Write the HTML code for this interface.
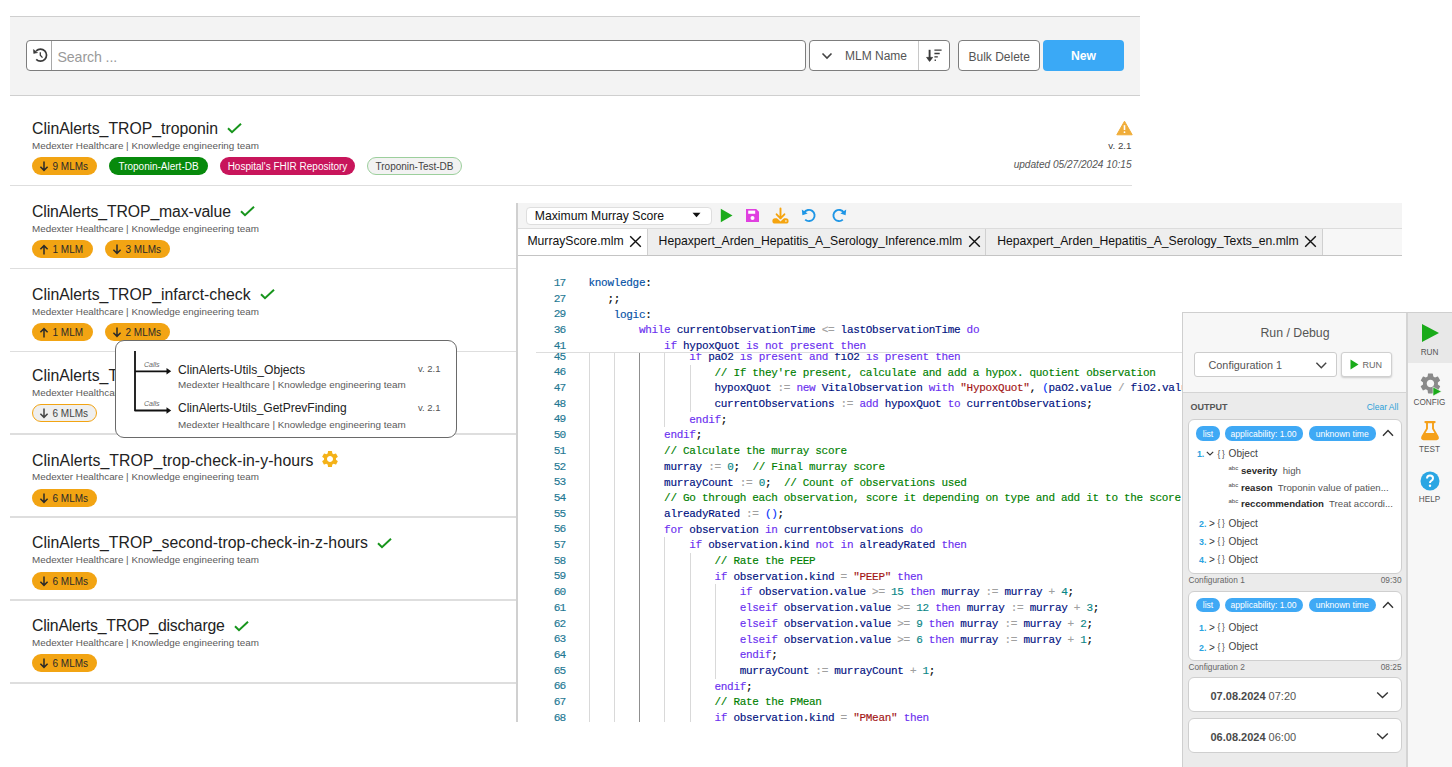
<!DOCTYPE html><html><head><meta charset="utf-8"><style>html,body{margin:0;padding:0;}body{width:1452px;height:767px;position:relative;overflow:hidden;background:#fff;font-family:"Liberation Sans",sans-serif;}</style></head><body><div style="position:absolute;left:10px;top:16px;width:1130px;height:80px;box-sizing:border-box;background:#f3f3f3;border-top:1px solid #cfcfcf;border-bottom:1px solid #cfcfcf;"></div>
<div style="position:absolute;left:26px;top:40px;width:780px;height:31px;box-sizing:border-box;background:#fff;border:1px solid #7d7d7d;border-radius:4px;"></div>
<div style="position:absolute;left:51px;top:41px;width:1px;height:29px;box-sizing:border-box;background:#a8a8a8;"></div>
<svg style="position:absolute;left:31.5px;top:47px" width="18" height="18" viewBox="0 0 18 18"><path d="M4.22 3.82 A6.05 6.05 0 1 1 4.22 12.38" fill="none" stroke="#3a3a3a" stroke-width="1.7"/><path d="M1.4 2.5 L1.7 6.5 L5.6 5.6 Z" fill="#3a3a3a" stroke="#3a3a3a" stroke-width="0.5" stroke-linejoin="round"/><path d="M8.3 5.3 V8.3 L10.5 10.6" fill="none" stroke="#3a3a3a" stroke-width="1.3"/></svg>
<div style="position:absolute;left:57.50px;top:49.88px;font-family:'Liberation Sans', sans-serif;font-size:14.2px;line-height:14.2px;color:#9a9a9a;font-weight:400;font-style:normal;white-space:pre;letter-spacing:-0.12px;">Search ...</div>
<div style="position:absolute;left:809px;top:40px;width:141px;height:31px;box-sizing:border-box;background:#fff;border:1px solid #7d7d7d;border-radius:4px;"></div>
<div style="position:absolute;left:918px;top:41px;width:1px;height:29px;box-sizing:border-box;background:#c8c8c8;"></div>
<svg style="position:absolute;left:820px;top:51px" width="14" height="10" viewBox="0 0 14 10"><polyline points="2.5,2.5 7,7 11.5,2.5" fill="none" stroke="#444" stroke-width="1.6"/></svg>
<div style="position:absolute;left:845.00px;top:50.34px;font-family:'Liberation Sans', sans-serif;font-size:12px;line-height:12px;color:#555;font-weight:400;font-style:normal;white-space:pre;">MLM Name</div>
<svg style="position:absolute;left:925px;top:48px" width="18" height="16" viewBox="0 0 18 16"><path d="M4.6 1.8 V12" stroke="#3a3a3a" stroke-width="1.9" fill="none"/><path d="M1.6 9.4 L4.6 13.4 L7.6 9.4 Z" fill="#3a3a3a" stroke="#3a3a3a" stroke-width="0.8" stroke-linejoin="round"/><path d="M9.4 2.1 H16.6 M9.4 5.5 H14.7 M9.4 8.9 H12.8 M9.6 12.2 H10.9" stroke="#3a3a3a" stroke-width="1.4" fill="none"/></svg>
<div style="position:absolute;left:958px;top:40px;width:82px;height:31px;box-sizing:border-box;background:#fff;border:1px solid #7d7d7d;border-radius:4px;"></div>
<div style="position:absolute;left:968.50px;top:50.64px;font-family:'Liberation Sans', sans-serif;font-size:12px;line-height:12px;color:#555;font-weight:400;font-style:normal;white-space:pre;">Bulk Delete</div>
<div style="position:absolute;left:1043px;top:40px;width:81px;height:31px;box-sizing:border-box;background:#3aa9f6;border-radius:4px;"></div>
<div style="position:absolute;left:1083.50px;transform:translateX(-50%);top:50.47px;font-family:'Liberation Sans', sans-serif;font-size:12.2px;line-height:12.2px;color:#fff;font-weight:700;font-style:normal;white-space:pre;">New</div>
<div style="position:absolute;left:10px;top:184.75px;width:1122px;height:1.5px;box-sizing:border-box;background:#dedede;"></div>
<div id="t0" style="position:absolute;left:32px;top:120.78px;font-family:'Liberation Sans', sans-serif;font-size:15.8px;line-height:15.8px;color:#222;white-space:pre;letter-spacing:0px">ClinAlerts_TROP_troponin<span style="display:inline-block;position:relative;width:0;height:0;"><svg style="position:absolute;left:9px;top:-10.5px" width="15" height="11" viewBox="0 0 15 11"><polyline points="1,5.2 5,9.2 14,0.8" fill="none" stroke="#17951c" stroke-width="2"/></svg></span></div>
<div style="position:absolute;left:32.00px;top:140.76px;font-family:'Liberation Sans', sans-serif;font-size:9.85px;line-height:9.85px;color:#5a5a5a;font-weight:400;font-style:normal;white-space:pre;">Medexter Healthcare | Knowledge engineering team</div>
<div style="position:absolute;left:32px;top:157px;width:65px;height:18px;box-sizing:border-box;background:#f2a413;border-radius:9px;"></div><svg style="position:absolute;left:39.2px;top:160.6px" width="10" height="11" viewBox="0 0 10 11"><path d="M5 0.5 V9.2 M1.4 5.8 L5 9.4 L8.6 5.8" fill="none" stroke="#2a2a2a" stroke-width="1.5"/></svg><div style="position:absolute;left:52.50px;top:162.13px;font-family:'Liberation Sans', sans-serif;font-size:10px;line-height:10px;color:#2a2a2a;font-weight:400;font-style:normal;white-space:pre;">9 MLMs</div>
<div style="position:absolute;left:109px;top:157px;width:99px;height:18px;box-sizing:border-box;background:#078a0c;border-radius:9px;"></div><div style="position:absolute;left:158.50px;transform:translateX(-50%);top:162.13px;font-family:'Liberation Sans', sans-serif;font-size:10px;line-height:10px;color:#fff;font-weight:400;font-style:normal;white-space:pre;">Troponin-Alert-DB</div>
<div style="position:absolute;left:220px;top:157px;width:135px;height:18px;box-sizing:border-box;background:#c8155b;border-radius:9px;"></div><div style="position:absolute;left:287.50px;transform:translateX(-50%);top:162.13px;font-family:'Liberation Sans', sans-serif;font-size:10px;line-height:10px;color:#fff;font-weight:400;font-style:normal;white-space:pre;">Hospital&#x27;s FHIR Repository</div>
<div style="position:absolute;left:367px;top:157px;width:95px;height:18px;box-sizing:border-box;background:#f2f2f2;border:1px solid #9ccf9c;border-radius:9px;"></div><div style="position:absolute;left:414.50px;transform:translateX(-50%);top:162.13px;font-family:'Liberation Sans', sans-serif;font-size:10px;line-height:10px;color:#444;font-weight:400;font-style:normal;white-space:pre;">Troponin-Test-DB</div>
<div style="position:absolute;left:10px;top:267.75px;width:1122px;height:1.5px;box-sizing:border-box;background:#dedede;"></div>
<div id="t1" style="position:absolute;left:32px;top:203.71px;font-family:'Liberation Sans', sans-serif;font-size:15.8px;line-height:15.8px;color:#222;white-space:pre;letter-spacing:-0.125px">ClinAlerts_TROP_max-value<span style="display:inline-block;position:relative;width:0;height:0;"><svg style="position:absolute;left:9px;top:-10.5px" width="15" height="11" viewBox="0 0 15 11"><polyline points="1,5.2 5,9.2 14,0.8" fill="none" stroke="#17951c" stroke-width="2"/></svg></span></div>
<div style="position:absolute;left:32.00px;top:223.69px;font-family:'Liberation Sans', sans-serif;font-size:9.85px;line-height:9.85px;color:#5a5a5a;font-weight:400;font-style:normal;white-space:pre;">Medexter Healthcare | Knowledge engineering team</div>
<div style="position:absolute;left:32px;top:240px;width:61px;height:18px;box-sizing:border-box;background:#f2a413;border-radius:9px;"></div><svg style="position:absolute;left:39.2px;top:243.6px" width="10" height="11" viewBox="0 0 10 11"><path d="M5 10.5 V1.8 M1.4 5.2 L5 1.6 L8.6 5.2" fill="none" stroke="#2a2a2a" stroke-width="1.5"/></svg><div style="position:absolute;left:52.50px;top:245.13px;font-family:'Liberation Sans', sans-serif;font-size:10px;line-height:10px;color:#2a2a2a;font-weight:400;font-style:normal;white-space:pre;">1 MLM</div>
<div style="position:absolute;left:105px;top:240px;width:65px;height:18px;box-sizing:border-box;background:#f2a413;border-radius:9px;"></div><svg style="position:absolute;left:112.2px;top:243.6px" width="10" height="11" viewBox="0 0 10 11"><path d="M5 0.5 V9.2 M1.4 5.8 L5 9.4 L8.6 5.8" fill="none" stroke="#2a2a2a" stroke-width="1.5"/></svg><div style="position:absolute;left:125.50px;top:245.13px;font-family:'Liberation Sans', sans-serif;font-size:10px;line-height:10px;color:#2a2a2a;font-weight:400;font-style:normal;white-space:pre;">3 MLMs</div>
<div style="position:absolute;left:10px;top:350.75px;width:1122px;height:1.5px;box-sizing:border-box;background:#dedede;"></div>
<div id="t2" style="position:absolute;left:32px;top:286.64px;font-family:'Liberation Sans', sans-serif;font-size:15.8px;line-height:15.8px;color:#222;white-space:pre;letter-spacing:0px">ClinAlerts_TROP_infarct-check<span style="display:inline-block;position:relative;width:0;height:0;"><svg style="position:absolute;left:9px;top:-10.5px" width="15" height="11" viewBox="0 0 15 11"><polyline points="1,5.2 5,9.2 14,0.8" fill="none" stroke="#17951c" stroke-width="2"/></svg></span></div>
<div style="position:absolute;left:32.00px;top:306.62px;font-family:'Liberation Sans', sans-serif;font-size:9.85px;line-height:9.85px;color:#5a5a5a;font-weight:400;font-style:normal;white-space:pre;">Medexter Healthcare | Knowledge engineering team</div>
<div style="position:absolute;left:32px;top:323px;width:61px;height:18px;box-sizing:border-box;background:#f2a413;border-radius:9px;"></div><svg style="position:absolute;left:39.2px;top:326.6px" width="10" height="11" viewBox="0 0 10 11"><path d="M5 10.5 V1.8 M1.4 5.2 L5 1.6 L8.6 5.2" fill="none" stroke="#2a2a2a" stroke-width="1.5"/></svg><div style="position:absolute;left:52.50px;top:328.14px;font-family:'Liberation Sans', sans-serif;font-size:10px;line-height:10px;color:#2a2a2a;font-weight:400;font-style:normal;white-space:pre;">1 MLM</div>
<div style="position:absolute;left:105px;top:323px;width:65px;height:18px;box-sizing:border-box;background:#f2a413;border-radius:9px;"></div><svg style="position:absolute;left:112.2px;top:326.6px" width="10" height="11" viewBox="0 0 10 11"><path d="M5 0.5 V9.2 M1.4 5.8 L5 9.4 L8.6 5.8" fill="none" stroke="#2a2a2a" stroke-width="1.5"/></svg><div style="position:absolute;left:125.50px;top:328.14px;font-family:'Liberation Sans', sans-serif;font-size:10px;line-height:10px;color:#2a2a2a;font-weight:400;font-style:normal;white-space:pre;">2 MLMs</div>
<div style="position:absolute;left:10px;top:433.25px;width:1122px;height:1.5px;box-sizing:border-box;background:#dedede;"></div>
<div id="t3" style="position:absolute;left:32px;top:367.57px;font-family:'Liberation Sans', sans-serif;font-size:15.8px;line-height:15.8px;color:#222;white-space:pre;letter-spacing:0px">ClinAlerts_TROP_trop-check-in-x-hours<span style="display:inline-block;position:relative;width:0;height:0;"><svg style="position:absolute;left:9px;top:-10.5px" width="15" height="11" viewBox="0 0 15 11"><polyline points="1,5.2 5,9.2 14,0.8" fill="none" stroke="#17951c" stroke-width="2"/></svg></span></div>
<div style="position:absolute;left:32.00px;top:387.55px;font-family:'Liberation Sans', sans-serif;font-size:9.85px;line-height:9.85px;color:#5a5a5a;font-weight:400;font-style:normal;white-space:pre;">Medexter Healthcare | Knowledge engineering team</div>
<div style="position:absolute;left:32px;top:404px;width:65px;height:18px;box-sizing:border-box;background:#efefef;border:1px solid #f2a413;border-radius:9px;"></div><svg style="position:absolute;left:39.2px;top:407.6px" width="10" height="11" viewBox="0 0 10 11"><path d="M5 0.5 V9.2 M1.4 5.8 L5 9.4 L8.6 5.8" fill="none" stroke="#444" stroke-width="1.5"/></svg><div style="position:absolute;left:52.50px;top:409.14px;font-family:'Liberation Sans', sans-serif;font-size:10px;line-height:10px;color:#444;font-weight:400;font-style:normal;white-space:pre;">6 MLMs</div>
<div style="position:absolute;left:10px;top:516.25px;width:1122px;height:1.5px;box-sizing:border-box;background:#dedede;"></div>
<div id="t4" style="position:absolute;left:32px;top:452.50px;font-family:'Liberation Sans', sans-serif;font-size:15.8px;line-height:15.8px;color:#222;white-space:pre;letter-spacing:0.087px">ClinAlerts_TROP_trop-check-in-y-hours<span style="display:inline-block;position:relative;width:0;height:0;"><svg style="position:absolute;left:6.4px;top:-16.6px" width="20" height="20" viewBox="0 0 24 24"><path fill="#f4b219" d="M19.14 12.94c.04-.3.06-.61.06-.94 0-.32-.02-.64-.07-.94l2.03-1.58a.49.49 0 0 0 .12-.61l-1.92-3.32a.488.488 0 0 0-.59-.22l-2.39.96c-.5-.38-1.030-.7-1.62-.94l-.36-2.54a.484.484 0 0 0-.48-.41h-3.84c-.24 0-.43.17-.47.41l-.36 2.54c-.59.24-1.130.57-1.62.94l-2.39-.96a.48.48 0 0 0-.59.22L2.740 8.870c-.12.21-.08.47.12.61l2.030 1.580c-.05.3-.09.63-.09.94s.02.64.07.94l-2.03 1.58a.49.49 0 0 0-.12.61l1.92 3.32c.12.22.37.29.59.22l2.39-.96c.5.38 1.03.7 1.62.94l.36 2.54c.05.24.24.41.48.41h3.84c.24 0 .44-.17.47-.41l.36-2.54c.59-.24 1.13-.56 1.62-.94l2.39.96c.22.08.47 0 .59-.22l1.92-3.32c.12-.22.07-.47-.12-.61l-2.01-1.58zM12 15.6c-1.98 0-3.6-1.620-3.6-3.6s1.620-3.6 3.6-3.6 3.6 1.62 3.6 3.6-1.62 3.6-3.6 3.6z"/></svg></span></div>
<div style="position:absolute;left:32.00px;top:472.48px;font-family:'Liberation Sans', sans-serif;font-size:9.85px;line-height:9.85px;color:#5a5a5a;font-weight:400;font-style:normal;white-space:pre;">Medexter Healthcare | Knowledge engineering team</div>
<div style="position:absolute;left:32px;top:489px;width:65px;height:18px;box-sizing:border-box;background:#f2a413;border-radius:9px;"></div><svg style="position:absolute;left:39.2px;top:492.6px" width="10" height="11" viewBox="0 0 10 11"><path d="M5 0.5 V9.2 M1.4 5.8 L5 9.4 L8.6 5.8" fill="none" stroke="#2a2a2a" stroke-width="1.5"/></svg><div style="position:absolute;left:52.50px;top:494.14px;font-family:'Liberation Sans', sans-serif;font-size:10px;line-height:10px;color:#2a2a2a;font-weight:400;font-style:normal;white-space:pre;">6 MLMs</div>
<div style="position:absolute;left:10px;top:599.25px;width:1122px;height:1.5px;box-sizing:border-box;background:#dedede;"></div>
<div id="t5" style="position:absolute;left:32px;top:535.43px;font-family:'Liberation Sans', sans-serif;font-size:15.8px;line-height:15.8px;color:#222;white-space:pre;letter-spacing:0.035px">ClinAlerts_TROP_second-trop-check-in-z-hours<span style="display:inline-block;position:relative;width:0;height:0;"><svg style="position:absolute;left:9px;top:-10.5px" width="15" height="11" viewBox="0 0 15 11"><polyline points="1,5.2 5,9.2 14,0.8" fill="none" stroke="#17951c" stroke-width="2"/></svg></span></div>
<div style="position:absolute;left:32.00px;top:555.41px;font-family:'Liberation Sans', sans-serif;font-size:9.85px;line-height:9.85px;color:#5a5a5a;font-weight:400;font-style:normal;white-space:pre;">Medexter Healthcare | Knowledge engineering team</div>
<div style="position:absolute;left:32px;top:572px;width:65px;height:18px;box-sizing:border-box;background:#f2a413;border-radius:9px;"></div><svg style="position:absolute;left:39.2px;top:575.6px" width="10" height="11" viewBox="0 0 10 11"><path d="M5 0.5 V9.2 M1.4 5.8 L5 9.4 L8.6 5.8" fill="none" stroke="#2a2a2a" stroke-width="1.5"/></svg><div style="position:absolute;left:52.50px;top:577.13px;font-family:'Liberation Sans', sans-serif;font-size:10px;line-height:10px;color:#2a2a2a;font-weight:400;font-style:normal;white-space:pre;">6 MLMs</div>
<div style="position:absolute;left:10px;top:682.25px;width:1122px;height:1.5px;box-sizing:border-box;background:#dedede;"></div>
<div id="t6" style="position:absolute;left:32px;top:618.36px;font-family:'Liberation Sans', sans-serif;font-size:15.8px;line-height:15.8px;color:#222;white-space:pre;letter-spacing:-0.194px">ClinAlerts_TROP_discharge<span style="display:inline-block;position:relative;width:0;height:0;"><svg style="position:absolute;left:9px;top:-10.5px" width="15" height="11" viewBox="0 0 15 11"><polyline points="1,5.2 5,9.2 14,0.8" fill="none" stroke="#17951c" stroke-width="2"/></svg></span></div>
<div style="position:absolute;left:32.00px;top:638.34px;font-family:'Liberation Sans', sans-serif;font-size:9.85px;line-height:9.85px;color:#5a5a5a;font-weight:400;font-style:normal;white-space:pre;">Medexter Healthcare | Knowledge engineering team</div>
<div style="position:absolute;left:32px;top:654px;width:65px;height:18px;box-sizing:border-box;background:#f2a413;border-radius:9px;"></div><svg style="position:absolute;left:39.2px;top:657.6px" width="10" height="11" viewBox="0 0 10 11"><path d="M5 0.5 V9.2 M1.4 5.8 L5 9.4 L8.6 5.8" fill="none" stroke="#2a2a2a" stroke-width="1.5"/></svg><div style="position:absolute;left:52.50px;top:659.13px;font-family:'Liberation Sans', sans-serif;font-size:10px;line-height:10px;color:#2a2a2a;font-weight:400;font-style:normal;white-space:pre;">6 MLMs</div>
<svg style="position:absolute;left:1116px;top:120px" width="17" height="16" viewBox="0 0 17 16"><path d="M8.5 1.2 L16.2 14.8 H0.8 Z" fill="#f0ad3a" stroke="#f0ad3a" stroke-width="1" stroke-linejoin="round"/><path d="M8.5 5.2 V10" stroke="#fff" stroke-width="1.6"/><circle cx="8.5" cy="12.2" r="0.9" fill="#fff"/></svg>
<div style="position:absolute;right:320.50px;top:140.50px;font-family:'Liberation Sans', sans-serif;font-size:9.8px;line-height:9.8px;color:#444;font-weight:400;font-style:normal;white-space:pre;">v. 2.1</div>
<div style="position:absolute;right:320.50px;top:160.45px;font-family:'Liberation Sans', sans-serif;font-size:10.1px;line-height:10.1px;color:#555;font-weight:400;font-style:italic;white-space:pre;">updated 05/27/2024 10:15</div>
<div style="position:absolute;left:115px;top:340px;width:342px;height:98px;box-sizing:border-box;background:#fff;border:1px solid #6a6a6a;border-radius:9px;"></div>
<svg style="position:absolute;left:130px;top:348px" width="50" height="70" viewBox="0 0 50 70"><path d="M5 3 V63.3 M5 23.3 H37 M5 62.5 H37" fill="none" stroke="#111" stroke-width="1.8"/><path d="M36.5 20.1 L41.2 23.3 L36.5 26.5 Z M36.5 59.3 L41.2 62.5 L36.5 65.7 Z" fill="#111"/></svg>
<div style="position:absolute;left:144.00px;top:360.57px;font-family:'Liberation Sans', sans-serif;font-size:7px;line-height:7px;color:#666;font-weight:400;font-style:italic;white-space:pre;">Calls</div>
<div style="position:absolute;left:144.00px;top:400.07px;font-family:'Liberation Sans', sans-serif;font-size:7px;line-height:7px;color:#666;font-weight:400;font-style:italic;white-space:pre;">Calls</div>
<div style="position:absolute;left:178.00px;top:364.06px;font-family:'Liberation Sans', sans-serif;font-size:12.1px;line-height:12.1px;color:#222;font-weight:400;font-style:normal;white-space:pre;">ClinAlerts-Utils_Objects</div>
<div style="position:absolute;left:178.00px;top:380.12px;font-family:'Liberation Sans', sans-serif;font-size:9.9px;line-height:9.9px;color:#5a5a5a;font-weight:400;font-style:normal;white-space:pre;">Medexter Healthcare | Knowledge engineering team</div>
<div style="position:absolute;left:178.00px;top:402.04px;font-family:'Liberation Sans', sans-serif;font-size:12.0px;line-height:12.0px;color:#222;font-weight:400;font-style:normal;white-space:pre;">ClinAlerts-Utils_GetPrevFinding</div>
<div style="position:absolute;left:178.00px;top:419.92px;font-family:'Liberation Sans', sans-serif;font-size:9.9px;line-height:9.9px;color:#5a5a5a;font-weight:400;font-style:normal;white-space:pre;">Medexter Healthcare | Knowledge engineering team</div>
<div style="position:absolute;right:1011.50px;top:364.46px;font-family:'Liberation Sans', sans-serif;font-size:9.5px;line-height:9.5px;color:#555;font-weight:400;font-style:normal;white-space:pre;">v. 2.1</div>
<div style="position:absolute;right:1011.50px;top:402.96px;font-family:'Liberation Sans', sans-serif;font-size:9.5px;line-height:9.5px;color:#555;font-weight:400;font-style:normal;white-space:pre;">v. 2.1</div>
<div style="position:absolute;left:516px;top:203px;width:886px;height:519px;box-sizing:border-box;background:#fff;"></div>
<div style="position:absolute;left:515.5px;top:203px;width:2px;height:519px;box-sizing:border-box;background:#d0d0d0;"></div>
<div style="position:absolute;left:518px;top:203px;width:884px;height:25px;box-sizing:border-box;background:#f4f4f4;"></div>
<div style="position:absolute;left:526px;top:207px;width:186px;height:18px;box-sizing:border-box;background:#fff;border:1px solid #dedede;border-radius:4px;"></div>
<div style="position:absolute;left:534.80px;top:209.87px;font-family:'Liberation Sans', sans-serif;font-size:12.2px;line-height:12.2px;color:#111;font-weight:400;font-style:normal;white-space:pre;">Maximum Murray Score</div>
<svg style="position:absolute;left:692px;top:212px" width="9" height="6" viewBox="0 0 9 6"><path d="M0.5 0.8 H8.5 L4.5 5.2 Z" fill="#111"/></svg>
<svg style="position:absolute;left:720px;top:208px" width="13" height="15" viewBox="0 0 13 15"><path d="M0.8 0.8 L12.5 7.5 L0.8 14.2 Z" fill="#1aab1a"/></svg>
<svg style="position:absolute;left:745px;top:208px" width="15" height="15" viewBox="0 0 15 15"><path d="M1 1 H11.2 L14 3.8 V14 H1 Z" fill="#e040e0"/><rect x="3.2" y="2.6" width="7" height="3.2" fill="#fff"/><circle cx="7.5" cy="10" r="2" fill="#fff"/></svg>
<svg style="position:absolute;left:772px;top:207px" width="17" height="17" viewBox="0 0 17 17"><rect x="0.4" y="11.3" width="16.2" height="5.3" rx="2.65" fill="#f5a40f"/><path d="M4.6 9.6 L8.5 13.4 L12.4 9.6" fill="none" stroke="#f4f4f4" stroke-width="1.6"/><rect x="13.1" y="13.2" width="1.6" height="1.6" fill="#fbe3b0"/><path d="M8.5 1.4 V11.4 M4.6 7.3 L8.5 11.3 L12.4 7.3" fill="none" stroke="#f5a40f" stroke-width="1.9" stroke-linecap="round" stroke-linejoin="round"/></svg>
<svg style="position:absolute;left:801px;top:207px" width="17" height="16" viewBox="0 0 17 16"><path d="M3.2 5.6 A5.6 5.6 0 1 1 4.2 12.6" fill="none" stroke="#1e96e6" stroke-width="1.9"/><path d="M0.8 2.6 L1.4 8.2 L6.6 6.6 Z" fill="#1e96e6"/></svg>
<svg style="position:absolute;left:830px;top:207px" width="17" height="16" viewBox="0 0 17 16"><path d="M13.8 5.6 A5.6 5.6 0 1 0 12.8 12.6" fill="none" stroke="#1e96e6" stroke-width="1.9"/><path d="M16.2 2.6 L15.6 8.2 L10.4 6.6 Z" fill="#1e96e6"/></svg>
<div style="position:absolute;left:518px;top:228px;width:884px;height:28px;box-sizing:border-box;background:#f7f7f7;border-top:1px solid #dcdcdc;border-bottom:1px solid #c4c4c4;"></div>
<div style="position:absolute;left:518px;top:229px;width:129px;height:26px;box-sizing:border-box;background:#fff;"></div>
<div style="position:absolute;left:647px;top:229px;width:338px;height:26px;box-sizing:border-box;background:#eeeeee;border-left:1px solid #d0d0d0;"></div>
<div style="position:absolute;left:985px;top:229px;width:338px;height:26px;box-sizing:border-box;background:#eeeeee;border-left:1px solid #d0d0d0;border-right:1px solid #d0d0d0;"></div>
<div style="position:absolute;left:527.40px;top:235.47px;font-family:'Liberation Sans', sans-serif;font-size:12.2px;line-height:12.2px;color:#111;font-weight:400;font-style:normal;white-space:pre;">MurrayScore.mlm</div>
<svg style="position:absolute;left:629px;top:234.5px" width="13" height="13" viewBox="0 0 13 13"><path d="M1.2 1.2 L11.8 11.8 M11.8 1.2 L1.2 11.8" stroke="#111" stroke-width="1.4"/></svg>
<div style="position:absolute;left:658.60px;top:235.47px;font-family:'Liberation Sans', sans-serif;font-size:12.2px;line-height:12.2px;color:#111;font-weight:400;font-style:normal;white-space:pre;">Hepaxpert_Arden_Hepatitis_A_Serology_Inference.mlm</div>
<svg style="position:absolute;left:968px;top:234.5px" width="13" height="13" viewBox="0 0 13 13"><path d="M1.2 1.2 L11.8 11.8 M11.8 1.2 L1.2 11.8" stroke="#111" stroke-width="1.4"/></svg>
<div style="position:absolute;left:997.20px;top:235.47px;font-family:'Liberation Sans', sans-serif;font-size:12.2px;line-height:12.2px;color:#111;font-weight:400;font-style:normal;white-space:pre;">Hepaxpert_Arden_Hepatitis_A_Serology_Texts_en.mlm</div>
<svg style="position:absolute;left:1304px;top:234.5px" width="13" height="13" viewBox="0 0 13 13"><path d="M1.2 1.2 L11.8 11.8 M11.8 1.2 L1.2 11.8" stroke="#111" stroke-width="1.4"/></svg>
<div style="position:absolute;left:518px;top:353px;width:884px;height:369px;overflow:hidden;">
<div style="position:absolute;left:70.50px;top:0.00px;width:1px;height:372.75px;background:#d9d9d9"></div>
<div style="position:absolute;left:95.82px;top:0.00px;width:1px;height:372.75px;background:#d9d9d9"></div>
<div style="position:absolute;left:121.14px;top:0.00px;width:1px;height:372.75px;background:#8f8f8f"></div>
<div style="position:absolute;left:146.46px;top:0.00px;width:1px;height:74.45px;background:#d9d9d9"></div>
<div style="position:absolute;left:171.78px;top:11.65px;width:1px;height:47.10px;background:#d9d9d9"></div>
<div style="position:absolute;left:146.46px;top:184.35px;width:1px;height:188.40px;background:#d9d9d9"></div>
<div style="position:absolute;left:171.78px;top:200.05px;width:1px;height:172.70px;background:#d9d9d9"></div>
<div style="position:absolute;left:197.10px;top:231.45px;width:1px;height:94.20px;background:#d9d9d9"></div>
<div style="position:absolute;left:0;top:-4.05px;width:47.299999999999955px;text-align:right;font-family:'Liberation Mono', monospace;font-size:11.2px;line-height:15.7px;white-space:pre;letter-spacing:-0.9px;-webkit-text-stroke:0.15px;padding-top:0.7px;color:#237893">45</div>
<div style="position:absolute;left:70.50px;top:-4.05px;font-family:'Liberation Mono', monospace;font-size:11.0px;line-height:15.7px;white-space:pre;letter-spacing:-0.301px;-webkit-text-stroke:0.15px;transform:translateY(0.5px);color:#000">                <span style="color:#6a2ff0">if</span> <span style="color:#001080">paO2</span> <span style="color:#6a2ff0">is</span> <span style="color:#6a2ff0">present</span> <span style="color:#6a2ff0">and</span> <span style="color:#001080">fiO2</span> <span style="color:#6a2ff0">is</span> <span style="color:#6a2ff0">present</span> <span style="color:#6a2ff0">then</span></div>
<div style="position:absolute;left:0;top:11.65px;width:47.299999999999955px;text-align:right;font-family:'Liberation Mono', monospace;font-size:11.2px;line-height:15.7px;white-space:pre;letter-spacing:-0.9px;-webkit-text-stroke:0.15px;padding-top:0.7px;color:#237893">46</div>
<div style="position:absolute;left:70.50px;top:11.65px;font-family:'Liberation Mono', monospace;font-size:11.0px;line-height:15.7px;white-space:pre;letter-spacing:-0.301px;-webkit-text-stroke:0.15px;transform:translateY(0.5px);color:#000">                    <span style="color:#008000">// If they&#x27;re present, calculate and add a hypox. quotient observation</span></div>
<div style="position:absolute;left:0;top:27.35px;width:47.299999999999955px;text-align:right;font-family:'Liberation Mono', monospace;font-size:11.2px;line-height:15.7px;white-space:pre;letter-spacing:-0.9px;-webkit-text-stroke:0.15px;padding-top:0.7px;color:#237893">47</div>
<div style="position:absolute;left:70.50px;top:27.35px;font-family:'Liberation Mono', monospace;font-size:11.0px;line-height:15.7px;white-space:pre;letter-spacing:-0.301px;-webkit-text-stroke:0.15px;transform:translateY(0.5px);color:#000">                    <span style="color:#001080">hypoxQuot</span> <span style="color:#a0a0a0">:=</span> <span style="color:#6a2ff0">new</span> <span style="color:#001080">VitalObservation</span> <span style="color:#6a2ff0">with</span> <span style="color:#a31515">&quot;HypoxQuot&quot;</span><span style="color:#000">,</span> <span style="color:#0431fa">(</span><span style="color:#001080">paO2</span><span style="color:#000">.</span><span style="color:#001080">value</span> <span style="color:#a0a0a0">/</span> <span style="color:#001080">fiO2</span><span style="color:#000">.</span><span style="color:#001080">value</span><span style="color:#0431fa">)</span><span style="color:#000">;</span></div>
<div style="position:absolute;left:0;top:43.05px;width:47.299999999999955px;text-align:right;font-family:'Liberation Mono', monospace;font-size:11.2px;line-height:15.7px;white-space:pre;letter-spacing:-0.9px;-webkit-text-stroke:0.15px;padding-top:0.7px;color:#237893">48</div>
<div style="position:absolute;left:70.50px;top:43.05px;font-family:'Liberation Mono', monospace;font-size:11.0px;line-height:15.7px;white-space:pre;letter-spacing:-0.301px;-webkit-text-stroke:0.15px;transform:translateY(0.5px);color:#000">                    <span style="color:#001080">currentObservations</span> <span style="color:#a0a0a0">:=</span> <span style="color:#6a2ff0">add</span> <span style="color:#001080">hypoxQuot</span> <span style="color:#6a2ff0">to</span> <span style="color:#001080">currentObservations</span><span style="color:#000">;</span></div>
<div style="position:absolute;left:0;top:58.75px;width:47.299999999999955px;text-align:right;font-family:'Liberation Mono', monospace;font-size:11.2px;line-height:15.7px;white-space:pre;letter-spacing:-0.9px;-webkit-text-stroke:0.15px;padding-top:0.7px;color:#237893">49</div>
<div style="position:absolute;left:70.50px;top:58.75px;font-family:'Liberation Mono', monospace;font-size:11.0px;line-height:15.7px;white-space:pre;letter-spacing:-0.301px;-webkit-text-stroke:0.15px;transform:translateY(0.5px);color:#000">                <span style="color:#6a2ff0">endif</span><span style="color:#000">;</span></div>
<div style="position:absolute;left:0;top:74.45px;width:47.299999999999955px;text-align:right;font-family:'Liberation Mono', monospace;font-size:11.2px;line-height:15.7px;white-space:pre;letter-spacing:-0.9px;-webkit-text-stroke:0.15px;padding-top:0.7px;color:#237893">50</div>
<div style="position:absolute;left:70.50px;top:74.45px;font-family:'Liberation Mono', monospace;font-size:11.0px;line-height:15.7px;white-space:pre;letter-spacing:-0.301px;-webkit-text-stroke:0.15px;transform:translateY(0.5px);color:#000">            <span style="color:#6a2ff0">endif</span><span style="color:#000">;</span></div>
<div style="position:absolute;left:0;top:90.15px;width:47.299999999999955px;text-align:right;font-family:'Liberation Mono', monospace;font-size:11.2px;line-height:15.7px;white-space:pre;letter-spacing:-0.9px;-webkit-text-stroke:0.15px;padding-top:0.7px;color:#237893">51</div>
<div style="position:absolute;left:70.50px;top:90.15px;font-family:'Liberation Mono', monospace;font-size:11.0px;line-height:15.7px;white-space:pre;letter-spacing:-0.301px;-webkit-text-stroke:0.15px;transform:translateY(0.5px);color:#000">            <span style="color:#008000">// Calculate the murray score</span></div>
<div style="position:absolute;left:0;top:105.85px;width:47.299999999999955px;text-align:right;font-family:'Liberation Mono', monospace;font-size:11.2px;line-height:15.7px;white-space:pre;letter-spacing:-0.9px;-webkit-text-stroke:0.15px;padding-top:0.7px;color:#237893">52</div>
<div style="position:absolute;left:70.50px;top:105.85px;font-family:'Liberation Mono', monospace;font-size:11.0px;line-height:15.7px;white-space:pre;letter-spacing:-0.301px;-webkit-text-stroke:0.15px;transform:translateY(0.5px);color:#000">            <span style="color:#001080">murray</span> <span style="color:#a0a0a0">:=</span> <span style="color:#098686">0</span><span style="color:#000">;</span>  <span style="color:#008000">// Final murray score</span></div>
<div style="position:absolute;left:0;top:121.55px;width:47.299999999999955px;text-align:right;font-family:'Liberation Mono', monospace;font-size:11.2px;line-height:15.7px;white-space:pre;letter-spacing:-0.9px;-webkit-text-stroke:0.15px;padding-top:0.7px;color:#237893">53</div>
<div style="position:absolute;left:70.50px;top:121.55px;font-family:'Liberation Mono', monospace;font-size:11.0px;line-height:15.7px;white-space:pre;letter-spacing:-0.301px;-webkit-text-stroke:0.15px;transform:translateY(0.5px);color:#000">            <span style="color:#001080">murrayCount</span> <span style="color:#a0a0a0">:=</span> <span style="color:#098686">0</span><span style="color:#000">;</span>  <span style="color:#008000">// Count of observations used</span></div>
<div style="position:absolute;left:0;top:137.25px;width:47.299999999999955px;text-align:right;font-family:'Liberation Mono', monospace;font-size:11.2px;line-height:15.7px;white-space:pre;letter-spacing:-0.9px;-webkit-text-stroke:0.15px;padding-top:0.7px;color:#237893">54</div>
<div style="position:absolute;left:70.50px;top:137.25px;font-family:'Liberation Mono', monospace;font-size:11.0px;line-height:15.7px;white-space:pre;letter-spacing:-0.301px;-webkit-text-stroke:0.15px;transform:translateY(0.5px);color:#000">            <span style="color:#008000">// Go through each observation, score it depending on type and add it to the score</span></div>
<div style="position:absolute;left:0;top:152.95px;width:47.299999999999955px;text-align:right;font-family:'Liberation Mono', monospace;font-size:11.2px;line-height:15.7px;white-space:pre;letter-spacing:-0.9px;-webkit-text-stroke:0.15px;padding-top:0.7px;color:#237893">55</div>
<div style="position:absolute;left:70.50px;top:152.95px;font-family:'Liberation Mono', monospace;font-size:11.0px;line-height:15.7px;white-space:pre;letter-spacing:-0.301px;-webkit-text-stroke:0.15px;transform:translateY(0.5px);color:#000">            <span style="color:#001080">alreadyRated</span> <span style="color:#a0a0a0">:=</span> <span style="color:#0431fa">(</span><span style="color:#0431fa">)</span><span style="color:#000">;</span></div>
<div style="position:absolute;left:0;top:168.65px;width:47.299999999999955px;text-align:right;font-family:'Liberation Mono', monospace;font-size:11.2px;line-height:15.7px;white-space:pre;letter-spacing:-0.9px;-webkit-text-stroke:0.15px;padding-top:0.7px;color:#237893">56</div>
<div style="position:absolute;left:70.50px;top:168.65px;font-family:'Liberation Mono', monospace;font-size:11.0px;line-height:15.7px;white-space:pre;letter-spacing:-0.301px;-webkit-text-stroke:0.15px;transform:translateY(0.5px);color:#000">            <span style="color:#6a2ff0">for</span> <span style="color:#001080">observation</span> <span style="color:#6a2ff0">in</span> <span style="color:#001080">currentObservations</span> <span style="color:#6a2ff0">do</span></div>
<div style="position:absolute;left:0;top:184.35px;width:47.299999999999955px;text-align:right;font-family:'Liberation Mono', monospace;font-size:11.2px;line-height:15.7px;white-space:pre;letter-spacing:-0.9px;-webkit-text-stroke:0.15px;padding-top:0.7px;color:#237893">57</div>
<div style="position:absolute;left:70.50px;top:184.35px;font-family:'Liberation Mono', monospace;font-size:11.0px;line-height:15.7px;white-space:pre;letter-spacing:-0.301px;-webkit-text-stroke:0.15px;transform:translateY(0.5px);color:#000">                <span style="color:#6a2ff0">if</span> <span style="color:#001080">observation</span><span style="color:#000">.</span><span style="color:#001080">kind</span> <span style="color:#6a2ff0">not</span> <span style="color:#6a2ff0">in</span> <span style="color:#001080">alreadyRated</span> <span style="color:#6a2ff0">then</span></div>
<div style="position:absolute;left:0;top:200.05px;width:47.299999999999955px;text-align:right;font-family:'Liberation Mono', monospace;font-size:11.2px;line-height:15.7px;white-space:pre;letter-spacing:-0.9px;-webkit-text-stroke:0.15px;padding-top:0.7px;color:#237893">58</div>
<div style="position:absolute;left:70.50px;top:200.05px;font-family:'Liberation Mono', monospace;font-size:11.0px;line-height:15.7px;white-space:pre;letter-spacing:-0.301px;-webkit-text-stroke:0.15px;transform:translateY(0.5px);color:#000">                    <span style="color:#008000">// Rate the PEEP</span></div>
<div style="position:absolute;left:0;top:215.75px;width:47.299999999999955px;text-align:right;font-family:'Liberation Mono', monospace;font-size:11.2px;line-height:15.7px;white-space:pre;letter-spacing:-0.9px;-webkit-text-stroke:0.15px;padding-top:0.7px;color:#237893">59</div>
<div style="position:absolute;left:70.50px;top:215.75px;font-family:'Liberation Mono', monospace;font-size:11.0px;line-height:15.7px;white-space:pre;letter-spacing:-0.301px;-webkit-text-stroke:0.15px;transform:translateY(0.5px);color:#000">                    <span style="color:#6a2ff0">if</span> <span style="color:#001080">observation</span><span style="color:#000">.</span><span style="color:#001080">kind</span> <span style="color:#a0a0a0">=</span> <span style="color:#a31515">&quot;PEEP&quot;</span> <span style="color:#6a2ff0">then</span></div>
<div style="position:absolute;left:0;top:231.45px;width:47.299999999999955px;text-align:right;font-family:'Liberation Mono', monospace;font-size:11.2px;line-height:15.7px;white-space:pre;letter-spacing:-0.9px;-webkit-text-stroke:0.15px;padding-top:0.7px;color:#237893">60</div>
<div style="position:absolute;left:70.50px;top:231.45px;font-family:'Liberation Mono', monospace;font-size:11.0px;line-height:15.7px;white-space:pre;letter-spacing:-0.301px;-webkit-text-stroke:0.15px;transform:translateY(0.5px);color:#000">                        <span style="color:#6a2ff0">if</span> <span style="color:#001080">observation</span><span style="color:#000">.</span><span style="color:#001080">value</span> <span style="color:#a0a0a0">&gt;=</span> <span style="color:#098686">15</span> <span style="color:#6a2ff0">then</span> <span style="color:#001080">murray</span> <span style="color:#a0a0a0">:=</span> <span style="color:#001080">murray</span> <span style="color:#a0a0a0">+</span> <span style="color:#098686">4</span><span style="color:#000">;</span></div>
<div style="position:absolute;left:0;top:247.15px;width:47.299999999999955px;text-align:right;font-family:'Liberation Mono', monospace;font-size:11.2px;line-height:15.7px;white-space:pre;letter-spacing:-0.9px;-webkit-text-stroke:0.15px;padding-top:0.7px;color:#237893">61</div>
<div style="position:absolute;left:70.50px;top:247.15px;font-family:'Liberation Mono', monospace;font-size:11.0px;line-height:15.7px;white-space:pre;letter-spacing:-0.301px;-webkit-text-stroke:0.15px;transform:translateY(0.5px);color:#000">                        <span style="color:#6a2ff0">elseif</span> <span style="color:#001080">observation</span><span style="color:#000">.</span><span style="color:#001080">value</span> <span style="color:#a0a0a0">&gt;=</span> <span style="color:#098686">12</span> <span style="color:#6a2ff0">then</span> <span style="color:#001080">murray</span> <span style="color:#a0a0a0">:=</span> <span style="color:#001080">murray</span> <span style="color:#a0a0a0">+</span> <span style="color:#098686">3</span><span style="color:#000">;</span></div>
<div style="position:absolute;left:0;top:262.85px;width:47.299999999999955px;text-align:right;font-family:'Liberation Mono', monospace;font-size:11.2px;line-height:15.7px;white-space:pre;letter-spacing:-0.9px;-webkit-text-stroke:0.15px;padding-top:0.7px;color:#237893">62</div>
<div style="position:absolute;left:70.50px;top:262.85px;font-family:'Liberation Mono', monospace;font-size:11.0px;line-height:15.7px;white-space:pre;letter-spacing:-0.301px;-webkit-text-stroke:0.15px;transform:translateY(0.5px);color:#000">                        <span style="color:#6a2ff0">elseif</span> <span style="color:#001080">observation</span><span style="color:#000">.</span><span style="color:#001080">value</span> <span style="color:#a0a0a0">&gt;=</span> <span style="color:#098686">9</span> <span style="color:#6a2ff0">then</span> <span style="color:#001080">murray</span> <span style="color:#a0a0a0">:=</span> <span style="color:#001080">murray</span> <span style="color:#a0a0a0">+</span> <span style="color:#098686">2</span><span style="color:#000">;</span></div>
<div style="position:absolute;left:0;top:278.55px;width:47.299999999999955px;text-align:right;font-family:'Liberation Mono', monospace;font-size:11.2px;line-height:15.7px;white-space:pre;letter-spacing:-0.9px;-webkit-text-stroke:0.15px;padding-top:0.7px;color:#237893">63</div>
<div style="position:absolute;left:70.50px;top:278.55px;font-family:'Liberation Mono', monospace;font-size:11.0px;line-height:15.7px;white-space:pre;letter-spacing:-0.301px;-webkit-text-stroke:0.15px;transform:translateY(0.5px);color:#000">                        <span style="color:#6a2ff0">elseif</span> <span style="color:#001080">observation</span><span style="color:#000">.</span><span style="color:#001080">value</span> <span style="color:#a0a0a0">&gt;=</span> <span style="color:#098686">6</span> <span style="color:#6a2ff0">then</span> <span style="color:#001080">murray</span> <span style="color:#a0a0a0">:=</span> <span style="color:#001080">murray</span> <span style="color:#a0a0a0">+</span> <span style="color:#098686">1</span><span style="color:#000">;</span></div>
<div style="position:absolute;left:0;top:294.25px;width:47.299999999999955px;text-align:right;font-family:'Liberation Mono', monospace;font-size:11.2px;line-height:15.7px;white-space:pre;letter-spacing:-0.9px;-webkit-text-stroke:0.15px;padding-top:0.7px;color:#237893">64</div>
<div style="position:absolute;left:70.50px;top:294.25px;font-family:'Liberation Mono', monospace;font-size:11.0px;line-height:15.7px;white-space:pre;letter-spacing:-0.301px;-webkit-text-stroke:0.15px;transform:translateY(0.5px);color:#000">                        <span style="color:#6a2ff0">endif</span><span style="color:#000">;</span></div>
<div style="position:absolute;left:0;top:309.95px;width:47.299999999999955px;text-align:right;font-family:'Liberation Mono', monospace;font-size:11.2px;line-height:15.7px;white-space:pre;letter-spacing:-0.9px;-webkit-text-stroke:0.15px;padding-top:0.7px;color:#237893">65</div>
<div style="position:absolute;left:70.50px;top:309.95px;font-family:'Liberation Mono', monospace;font-size:11.0px;line-height:15.7px;white-space:pre;letter-spacing:-0.301px;-webkit-text-stroke:0.15px;transform:translateY(0.5px);color:#000">                        <span style="color:#001080">murrayCount</span> <span style="color:#a0a0a0">:=</span> <span style="color:#001080">murrayCount</span> <span style="color:#a0a0a0">+</span> <span style="color:#098686">1</span><span style="color:#000">;</span></div>
<div style="position:absolute;left:0;top:325.65px;width:47.299999999999955px;text-align:right;font-family:'Liberation Mono', monospace;font-size:11.2px;line-height:15.7px;white-space:pre;letter-spacing:-0.9px;-webkit-text-stroke:0.15px;padding-top:0.7px;color:#237893">66</div>
<div style="position:absolute;left:70.50px;top:325.65px;font-family:'Liberation Mono', monospace;font-size:11.0px;line-height:15.7px;white-space:pre;letter-spacing:-0.301px;-webkit-text-stroke:0.15px;transform:translateY(0.5px);color:#000">                    <span style="color:#6a2ff0">endif</span><span style="color:#000">;</span></div>
<div style="position:absolute;left:0;top:341.35px;width:47.299999999999955px;text-align:right;font-family:'Liberation Mono', monospace;font-size:11.2px;line-height:15.7px;white-space:pre;letter-spacing:-0.9px;-webkit-text-stroke:0.15px;padding-top:0.7px;color:#237893">67</div>
<div style="position:absolute;left:70.50px;top:341.35px;font-family:'Liberation Mono', monospace;font-size:11.0px;line-height:15.7px;white-space:pre;letter-spacing:-0.301px;-webkit-text-stroke:0.15px;transform:translateY(0.5px);color:#000">                    <span style="color:#008000">// Rate the PMean</span></div>
<div style="position:absolute;left:0;top:357.05px;width:47.299999999999955px;text-align:right;font-family:'Liberation Mono', monospace;font-size:11.2px;line-height:15.7px;white-space:pre;letter-spacing:-0.9px;-webkit-text-stroke:0.15px;padding-top:0.7px;color:#237893">68</div>
<div style="position:absolute;left:70.50px;top:357.05px;font-family:'Liberation Mono', monospace;font-size:11.0px;line-height:15.7px;white-space:pre;letter-spacing:-0.301px;-webkit-text-stroke:0.15px;transform:translateY(0.5px);color:#000">                    <span style="color:#6a2ff0">if</span> <span style="color:#001080">observation</span><span style="color:#000">.</span><span style="color:#001080">kind</span> <span style="color:#a0a0a0">=</span> <span style="color:#a31515">&quot;PMean&quot;</span> <span style="color:#6a2ff0">then</span></div>
</div>
<div style="position:absolute;left:518px;top:275.35px;width:47.299999999999955px;text-align:right;font-family:'Liberation Mono', monospace;font-size:11.2px;line-height:15.7px;white-space:pre;letter-spacing:-0.9px;-webkit-text-stroke:0.15px;padding-top:0.7px;color:#237893">17</div>
<div style="position:absolute;left:588.50px;top:275.35px;font-family:'Liberation Mono', monospace;font-size:11.0px;line-height:15.7px;white-space:pre;letter-spacing:-0.301px;-webkit-text-stroke:0.15px;transform:translateY(0.5px);color:#000"><span style="color:#0451a5">knowledge</span><span style="color:#000">:</span></div>
<div style="position:absolute;left:518px;top:291.05px;width:47.299999999999955px;text-align:right;font-family:'Liberation Mono', monospace;font-size:11.2px;line-height:15.7px;white-space:pre;letter-spacing:-0.9px;-webkit-text-stroke:0.15px;padding-top:0.7px;color:#237893">27</div>
<div style="position:absolute;left:588.50px;top:291.05px;font-family:'Liberation Mono', monospace;font-size:11.0px;line-height:15.7px;white-space:pre;letter-spacing:-0.301px;-webkit-text-stroke:0.15px;transform:translateY(0.5px);color:#000">   <span style="color:#000">;</span><span style="color:#000">;</span></div>
<div style="position:absolute;left:518px;top:306.75px;width:47.299999999999955px;text-align:right;font-family:'Liberation Mono', monospace;font-size:11.2px;line-height:15.7px;white-space:pre;letter-spacing:-0.9px;-webkit-text-stroke:0.15px;padding-top:0.7px;color:#237893">29</div>
<div style="position:absolute;left:588.50px;top:306.75px;font-family:'Liberation Mono', monospace;font-size:11.0px;line-height:15.7px;white-space:pre;letter-spacing:-0.301px;-webkit-text-stroke:0.15px;transform:translateY(0.5px);color:#000">    <span style="color:#0451a5">logic</span><span style="color:#000">:</span></div>
<div style="position:absolute;left:518px;top:322.45px;width:47.299999999999955px;text-align:right;font-family:'Liberation Mono', monospace;font-size:11.2px;line-height:15.7px;white-space:pre;letter-spacing:-0.9px;-webkit-text-stroke:0.15px;padding-top:0.7px;color:#237893">36</div>
<div style="position:absolute;left:588.50px;top:322.45px;font-family:'Liberation Mono', monospace;font-size:11.0px;line-height:15.7px;white-space:pre;letter-spacing:-0.301px;-webkit-text-stroke:0.15px;transform:translateY(0.5px);color:#000">        <span style="color:#6a2ff0">while</span> <span style="color:#001080">currentObservationTime</span> <span style="color:#a0a0a0">&lt;=</span> <span style="color:#001080">lastObservationTime</span> <span style="color:#6a2ff0">do</span></div>
<div style="position:absolute;left:518px;top:338.15px;width:47.299999999999955px;text-align:right;font-family:'Liberation Mono', monospace;font-size:11.2px;line-height:15.7px;white-space:pre;letter-spacing:-0.9px;-webkit-text-stroke:0.15px;padding-top:0.7px;color:#237893">41</div>
<div style="position:absolute;left:588.50px;top:338.15px;font-family:'Liberation Mono', monospace;font-size:11.0px;line-height:15.7px;white-space:pre;letter-spacing:-0.301px;-webkit-text-stroke:0.15px;transform:translateY(0.5px);color:#000">            <span style="color:#6a2ff0">if</span> <span style="color:#001080">hypoxQuot</span> <span style="color:#6a2ff0">is</span> <span style="color:#6a2ff0">not</span> <span style="color:#6a2ff0">present</span> <span style="color:#6a2ff0">then</span></div>
<div style="position:absolute;left:536px;top:352px;width:866px;height:1px;box-sizing:border-box;background:#dddddd;"></div>
<div style="position:absolute;left:1182px;top:312px;width:270px;height:455px;box-sizing:border-box;background:#f7f7f7;border-left:1px solid #cfcfcf;border-top:1px solid #cfcfcf;"></div>
<div style="position:absolute;left:1183px;top:392px;width:224px;height:375px;box-sizing:border-box;background:#ebebeb;border-top:1px solid #d4d4d4;"></div>
<div style="position:absolute;left:1406px;top:313px;width:46px;height:454px;box-sizing:border-box;background:#f7f7f7;border-left:2px solid #d4d4d4;"></div>
<div style="position:absolute;left:1408px;top:313px;width:44px;height:50px;box-sizing:border-box;background:#e8e8e8;"></div>
<div style="position:absolute;left:1295.00px;transform:translateX(-50%);top:326.59px;font-family:'Liberation Sans', sans-serif;font-size:12.3px;line-height:12.3px;color:#555;font-weight:400;font-style:normal;white-space:pre;">Run / Debug</div>
<div style="position:absolute;left:1194px;top:352px;width:143px;height:25px;box-sizing:border-box;background:#fff;border:1px solid #cccccc;border-radius:3px;"></div>
<div style="position:absolute;left:1208.50px;top:359.82px;font-family:'Liberation Sans', sans-serif;font-size:10.85px;line-height:10.85px;color:#555;font-weight:400;font-style:normal;white-space:pre;">Configuration 1</div>
<svg style="position:absolute;left:1315px;top:361px" width="13" height="9" viewBox="0 0 13 9"><polyline points="1.4,1.7 6.3,6.8 11.2,1.7" fill="none" stroke="#444" stroke-width="1.4"/></svg>
<div style="position:absolute;left:1341px;top:352px;width:51px;height:25px;box-sizing:border-box;background:#fff;border:1px solid #d0d0d0;border-radius:3px;box-shadow:0 1px 2px rgba(0,0,0,0.18);"></div>
<svg style="position:absolute;left:1350px;top:359px" width="9" height="11" viewBox="0 0 9 11"><path d="M0.5 0.5 L8.5 5.5 L0.5 10.5 Z" fill="#1aab1a"/></svg>
<div style="position:absolute;left:1362.50px;top:361.18px;font-family:'Liberation Sans', sans-serif;font-size:9px;line-height:9px;color:#666;font-weight:400;font-style:normal;white-space:pre;">RUN</div>
<div style="position:absolute;left:1190.50px;top:402.58px;font-family:'Liberation Sans', sans-serif;font-size:9px;line-height:9px;color:#555;font-weight:700;font-style:normal;white-space:pre;">OUTPUT</div>
<div style="position:absolute;right:53.70px;top:402.80px;font-family:'Liberation Sans', sans-serif;font-size:8.5px;line-height:8.5px;color:#2a9fd8;font-weight:400;font-style:normal;white-space:pre;">Clear All</div>
<div style="position:absolute;left:1188px;top:419px;width:214px;height:155px;box-sizing:border-box;background:#fff;border:1px solid #cfcfcf;border-radius:6px;"></div>
<div style="position:absolute;left:1196px;top:426px;width:24px;height:14.5px;box-sizing:border-box;background:#3fa9f5;border-radius:7px;"></div><div style="position:absolute;left:1208.00px;transform:translateX(-50%);top:429.82px;font-family:'Liberation Sans', sans-serif;font-size:8.6px;line-height:8.6px;color:#fff;font-weight:400;font-style:normal;white-space:pre;">list</div>
<div style="position:absolute;left:1224.5px;top:426px;width:78px;height:14.5px;box-sizing:border-box;background:#3fa9f5;border-radius:7px;"></div><div style="position:absolute;left:1263.50px;transform:translateX(-50%);top:429.82px;font-family:'Liberation Sans', sans-serif;font-size:8.6px;line-height:8.6px;color:#fff;font-weight:400;font-style:normal;white-space:pre;">applicability: 1.00</div>
<div style="position:absolute;left:1309px;top:426px;width:66.5px;height:14.5px;box-sizing:border-box;background:#3fa9f5;border-radius:7px;"></div><div style="position:absolute;left:1342.25px;transform:translateX(-50%);top:429.82px;font-family:'Liberation Sans', sans-serif;font-size:8.6px;line-height:8.6px;color:#fff;font-weight:400;font-style:normal;white-space:pre;">unknown time</div>
<svg style="position:absolute;left:1381.5px;top:429px" width="12" height="8" viewBox="0 0 12 8"><polyline points="1,6.8 6,1.6 11,6.8" fill="none" stroke="#333" stroke-width="1.4"/></svg>
<div style="position:absolute;left:1196.90px;top:450.35px;font-family:'Liberation Sans', sans-serif;font-size:8.8px;line-height:8.8px;color:#2aa3e0;font-weight:700;font-style:normal;white-space:pre;">1.</div><svg style="position:absolute;left:1205.9px;top:451.2px" width="8" height="5" viewBox="0 0 8 5"><polyline points="0.8,0.8 4,4 7.2,0.8" fill="none" stroke="#333" stroke-width="1.1"/></svg><div style="position:absolute;left:1217.40px;top:450.56px;font-family:'Liberation Sans', sans-serif;font-size:8.2px;line-height:8.2px;color:#444;font-weight:400;font-style:normal;white-space:pre;">{</div><div style="position:absolute;left:1221.90px;top:450.56px;font-family:'Liberation Sans', sans-serif;font-size:8.2px;line-height:8.2px;color:#444;font-weight:400;font-style:normal;white-space:pre;">}</div><div style="position:absolute;left:1228.60px;top:449.25px;font-family:'Liberation Sans', sans-serif;font-size:10.1px;line-height:10.1px;color:#444;font-weight:400;font-style:normal;white-space:pre;">Object</div>
<div style="position:absolute;left:1228.50px;top:465.22px;font-family:'Liberation Sans', sans-serif;font-size:6px;line-height:6px;color:#444;font-weight:400;font-style:normal;white-space:pre;">abc</div>
<div style="position:absolute;left:1241px;top:465.83px;font-family:'Liberation Sans', sans-serif;font-size:9.65px;line-height:9.65px;white-space:pre;color:#333"><b style="color:#2b2b2b">severity</b>&nbsp; <span style="color:#555">high</span></div>
<div style="position:absolute;left:1228.50px;top:481.92px;font-family:'Liberation Sans', sans-serif;font-size:6px;line-height:6px;color:#444;font-weight:400;font-style:normal;white-space:pre;">abc</div>
<div style="position:absolute;left:1241px;top:482.53px;font-family:'Liberation Sans', sans-serif;font-size:9.65px;line-height:9.65px;white-space:pre;color:#333"><b style="color:#2b2b2b">reason</b>&nbsp; <span style="color:#555">Troponin value of patien...</span></div>
<div style="position:absolute;left:1228.50px;top:498.42px;font-family:'Liberation Sans', sans-serif;font-size:6px;line-height:6px;color:#444;font-weight:400;font-style:normal;white-space:pre;">abc</div>
<div style="position:absolute;left:1241px;top:499.03px;font-family:'Liberation Sans', sans-serif;font-size:9.65px;line-height:9.65px;white-space:pre;color:#333"><b style="color:#2b2b2b">reccommendation</b>&nbsp; <span style="color:#555">Treat accordi...</span></div>
<div style="position:absolute;left:1199.00px;top:520.05px;font-family:'Liberation Sans', sans-serif;font-size:8.8px;line-height:8.8px;color:#2aa3e0;font-weight:700;font-style:normal;white-space:pre;">2.</div><div style="position:absolute;left:1209.00px;top:519.03px;font-family:'Liberation Sans', sans-serif;font-size:10px;line-height:10px;color:#333;font-weight:400;font-style:normal;white-space:pre;">&gt;</div><div style="position:absolute;left:1217.40px;top:520.26px;font-family:'Liberation Sans', sans-serif;font-size:8.2px;line-height:8.2px;color:#444;font-weight:400;font-style:normal;white-space:pre;">{</div><div style="position:absolute;left:1221.90px;top:520.26px;font-family:'Liberation Sans', sans-serif;font-size:8.2px;line-height:8.2px;color:#444;font-weight:400;font-style:normal;white-space:pre;">}</div><div style="position:absolute;left:1228.60px;top:518.95px;font-family:'Liberation Sans', sans-serif;font-size:10.1px;line-height:10.1px;color:#444;font-weight:400;font-style:normal;white-space:pre;">Object</div>
<div style="position:absolute;left:1199.00px;top:537.65px;font-family:'Liberation Sans', sans-serif;font-size:8.8px;line-height:8.8px;color:#2aa3e0;font-weight:700;font-style:normal;white-space:pre;">3.</div><div style="position:absolute;left:1209.00px;top:536.63px;font-family:'Liberation Sans', sans-serif;font-size:10px;line-height:10px;color:#333;font-weight:400;font-style:normal;white-space:pre;">&gt;</div><div style="position:absolute;left:1217.40px;top:537.86px;font-family:'Liberation Sans', sans-serif;font-size:8.2px;line-height:8.2px;color:#444;font-weight:400;font-style:normal;white-space:pre;">{</div><div style="position:absolute;left:1221.90px;top:537.86px;font-family:'Liberation Sans', sans-serif;font-size:8.2px;line-height:8.2px;color:#444;font-weight:400;font-style:normal;white-space:pre;">}</div><div style="position:absolute;left:1228.60px;top:536.55px;font-family:'Liberation Sans', sans-serif;font-size:10.1px;line-height:10.1px;color:#444;font-weight:400;font-style:normal;white-space:pre;">Object</div>
<div style="position:absolute;left:1199.00px;top:555.95px;font-family:'Liberation Sans', sans-serif;font-size:8.8px;line-height:8.8px;color:#2aa3e0;font-weight:700;font-style:normal;white-space:pre;">4.</div><div style="position:absolute;left:1209.00px;top:554.93px;font-family:'Liberation Sans', sans-serif;font-size:10px;line-height:10px;color:#333;font-weight:400;font-style:normal;white-space:pre;">&gt;</div><div style="position:absolute;left:1217.40px;top:556.16px;font-family:'Liberation Sans', sans-serif;font-size:8.2px;line-height:8.2px;color:#444;font-weight:400;font-style:normal;white-space:pre;">{</div><div style="position:absolute;left:1221.90px;top:556.16px;font-family:'Liberation Sans', sans-serif;font-size:8.2px;line-height:8.2px;color:#444;font-weight:400;font-style:normal;white-space:pre;">}</div><div style="position:absolute;left:1228.60px;top:554.85px;font-family:'Liberation Sans', sans-serif;font-size:10.1px;line-height:10.1px;color:#444;font-weight:400;font-style:normal;white-space:pre;">Object</div>
<div style="position:absolute;left:1188.50px;top:576.17px;font-family:'Liberation Sans', sans-serif;font-size:8.3px;line-height:8.3px;color:#666;font-weight:400;font-style:normal;white-space:pre;">Configuration 1</div>
<div style="position:absolute;right:50.50px;top:576.17px;font-family:'Liberation Sans', sans-serif;font-size:8.3px;line-height:8.3px;color:#666;font-weight:400;font-style:normal;white-space:pre;">09:30</div>
<div style="position:absolute;left:1188px;top:591px;width:214px;height:70px;box-sizing:border-box;background:#fff;border:1px solid #cfcfcf;border-radius:6px;"></div>
<div style="position:absolute;left:1196px;top:597.5px;width:24px;height:14.5px;box-sizing:border-box;background:#3fa9f5;border-radius:7px;"></div><div style="position:absolute;left:1208.00px;transform:translateX(-50%);top:601.32px;font-family:'Liberation Sans', sans-serif;font-size:8.6px;line-height:8.6px;color:#fff;font-weight:400;font-style:normal;white-space:pre;">list</div>
<div style="position:absolute;left:1224.5px;top:597.5px;width:78px;height:14.5px;box-sizing:border-box;background:#3fa9f5;border-radius:7px;"></div><div style="position:absolute;left:1263.50px;transform:translateX(-50%);top:601.32px;font-family:'Liberation Sans', sans-serif;font-size:8.6px;line-height:8.6px;color:#fff;font-weight:400;font-style:normal;white-space:pre;">applicability: 1.00</div>
<div style="position:absolute;left:1309px;top:597.5px;width:66.5px;height:14.5px;box-sizing:border-box;background:#3fa9f5;border-radius:7px;"></div><div style="position:absolute;left:1342.25px;transform:translateX(-50%);top:601.32px;font-family:'Liberation Sans', sans-serif;font-size:8.6px;line-height:8.6px;color:#fff;font-weight:400;font-style:normal;white-space:pre;">unknown time</div>
<svg style="position:absolute;left:1381.5px;top:600.5px" width="12" height="8" viewBox="0 0 12 8"><polyline points="1,6.8 6,1.6 11,6.8" fill="none" stroke="#333" stroke-width="1.4"/></svg>
<div style="position:absolute;left:1199.00px;top:624.05px;font-family:'Liberation Sans', sans-serif;font-size:8.8px;line-height:8.8px;color:#2aa3e0;font-weight:700;font-style:normal;white-space:pre;">1.</div><div style="position:absolute;left:1209.00px;top:623.03px;font-family:'Liberation Sans', sans-serif;font-size:10px;line-height:10px;color:#333;font-weight:400;font-style:normal;white-space:pre;">&gt;</div><div style="position:absolute;left:1217.40px;top:624.26px;font-family:'Liberation Sans', sans-serif;font-size:8.2px;line-height:8.2px;color:#444;font-weight:400;font-style:normal;white-space:pre;">{</div><div style="position:absolute;left:1221.90px;top:624.26px;font-family:'Liberation Sans', sans-serif;font-size:8.2px;line-height:8.2px;color:#444;font-weight:400;font-style:normal;white-space:pre;">}</div><div style="position:absolute;left:1228.60px;top:622.95px;font-family:'Liberation Sans', sans-serif;font-size:10.1px;line-height:10.1px;color:#444;font-weight:400;font-style:normal;white-space:pre;">Object</div>
<div style="position:absolute;left:1199.00px;top:643.55px;font-family:'Liberation Sans', sans-serif;font-size:8.8px;line-height:8.8px;color:#2aa3e0;font-weight:700;font-style:normal;white-space:pre;">2.</div><div style="position:absolute;left:1209.00px;top:642.53px;font-family:'Liberation Sans', sans-serif;font-size:10px;line-height:10px;color:#333;font-weight:400;font-style:normal;white-space:pre;">&gt;</div><div style="position:absolute;left:1217.40px;top:643.76px;font-family:'Liberation Sans', sans-serif;font-size:8.2px;line-height:8.2px;color:#444;font-weight:400;font-style:normal;white-space:pre;">{</div><div style="position:absolute;left:1221.90px;top:643.76px;font-family:'Liberation Sans', sans-serif;font-size:8.2px;line-height:8.2px;color:#444;font-weight:400;font-style:normal;white-space:pre;">}</div><div style="position:absolute;left:1228.60px;top:642.45px;font-family:'Liberation Sans', sans-serif;font-size:10.1px;line-height:10.1px;color:#444;font-weight:400;font-style:normal;white-space:pre;">Object</div>
<div style="position:absolute;left:1188.50px;top:663.17px;font-family:'Liberation Sans', sans-serif;font-size:8.3px;line-height:8.3px;color:#666;font-weight:400;font-style:normal;white-space:pre;">Configuration 2</div>
<div style="position:absolute;right:50.50px;top:663.17px;font-family:'Liberation Sans', sans-serif;font-size:8.3px;line-height:8.3px;color:#666;font-weight:400;font-style:normal;white-space:pre;">08:25</div>
<div style="position:absolute;left:1188px;top:676.5px;width:214px;height:35px;box-sizing:border-box;background:#fff;border:1px solid #cfcfcf;border-radius:6px;"></div>
<div style="position:absolute;left:1210.5px;top:690.56px;font-family:'Liberation Sans', sans-serif;font-size:11px;line-height:11px;white-space:pre;color:#555"><b style="color:#4a4a4a">07.08.2024</b> 07:20</div>
<svg style="position:absolute;left:1376px;top:690.5px" width="13" height="8" viewBox="0 0 13 8"><polyline points="1.2,1.5 6.5,6.6 11.8,1.5" fill="none" stroke="#333" stroke-width="1.4"/></svg>
<div style="position:absolute;left:1188px;top:717.5px;width:214px;height:35px;box-sizing:border-box;background:#fff;border:1px solid #cfcfcf;border-radius:6px;"></div>
<div style="position:absolute;left:1210.5px;top:731.56px;font-family:'Liberation Sans', sans-serif;font-size:11px;line-height:11px;white-space:pre;color:#555"><b style="color:#4a4a4a">06.08.2024</b> 06:00</div>
<svg style="position:absolute;left:1376px;top:731.5px" width="13" height="8" viewBox="0 0 13 8"><polyline points="1.2,1.5 6.5,6.6 11.8,1.5" fill="none" stroke="#333" stroke-width="1.4"/></svg>
<svg style="position:absolute;left:1421px;top:323px" width="19" height="20" viewBox="0 0 19 20"><path d="M1 1 L18 10 L1 19 Z" fill="#1aab1a"/></svg>
<div style="position:absolute;left:1429.50px;transform:translateX(-50%);top:349.26px;font-family:'Liberation Sans', sans-serif;font-size:8.2px;line-height:8.2px;color:#555;font-weight:400;font-style:normal;white-space:pre;">RUN</div>
<svg style="position:absolute;left:1417.5px;top:370.7px" width="24.9" height="24.9" viewBox="0 0 24 24"><path fill="#8a8a8a" d="M19.14 12.94c.04-.3.06-.61.06-.94 0-.32-.02-.64-.07-.94l2.03-1.58a.49.49 0 0 0 .12-.61l-1.92-3.32a.488.488 0 0 0-.59-.22l-2.39.96c-.5-.38-1.03-.7-1.62-.94l-.36-2.54a.484.484 0 0 0-.48-.41h-3.84c-.24 0-.43.17-.47.41l-.36 2.54c-.59.24-1.13.57-1.62.94l-2.39-.96a.48.48 0 0 0-.59.22L2.74 8.87c-.12.21-.08.47.12.61l2.03 1.58c-.05.3-.09.63-.09.94s.02.64.07.94l-2.03 1.58a.49.49 0 0 0-.12.61l1.92 3.32c.12.22.37.29.59.22l2.39-.96c.5.38 1.03.7 1.62.94l.36 2.54c.05.24.24.41.48.41h3.84c.24 0 .44-.17.47-.41l.36-2.54c.59-.24 1.13-.56 1.62-.94l2.39.96c.22.08.47 0 .59-.22l1.92-3.32c.12-.22.07-.47-.12-.61l-2.01-1.58zM12 15.6c-1.98 0-3.6-1.62-3.6-3.6s1.62-3.6 3.6-3.6 3.6 1.62 3.6 3.6-1.62 3.6-3.6 3.6z"/></svg>
<svg style="position:absolute;left:1432px;top:386.4px" width="11" height="11" viewBox="0 0 11 11"><path d="M1 1 L9.5 5.5 L1 10 Z" fill="#1aab1a" stroke="#f7f7f7" stroke-width="0.6"/></svg>
<div style="position:absolute;left:1429.50px;transform:translateX(-50%);top:399.26px;font-family:'Liberation Sans', sans-serif;font-size:8.2px;line-height:8.2px;color:#555;font-weight:400;font-style:normal;white-space:pre;">CONFIG</div>
<svg style="position:absolute;left:1420px;top:420px" width="20" height="21" viewBox="0 0 20 21"><path d="M5.4 2.1 H14.6" stroke="#f5a01a" stroke-width="2.2" stroke-linecap="round"/><path d="M7.0 2.5 V8.6 L2.3 16.8 Q1.4 19.2 3.6 19.2 H16.4 Q18.6 19.2 17.7 16.8 L13.0 8.6 V2.5" fill="none" stroke="#f5a01a" stroke-width="1.9" stroke-linejoin="round"/><path d="M4.3 13 H15.7 L17.7 16.8 Q18.6 19.2 16.4 19.2 H3.6 Q1.4 19.2 2.3 16.8 Z" fill="#f5a01a"/></svg>
<div style="position:absolute;left:1429.50px;transform:translateX(-50%);top:445.56px;font-family:'Liberation Sans', sans-serif;font-size:8.2px;line-height:8.2px;color:#555;font-weight:400;font-style:normal;white-space:pre;">TEST</div>
<svg style="position:absolute;left:1419.5px;top:470.5px" width="20" height="20" viewBox="0 0 20 20"><circle cx="10" cy="10" r="9.5" fill="#2ba6e3"/><path d="M7 7.6 Q7 4.6 10 4.6 Q13 4.6 13 7.3 Q13 8.9 11.2 9.8 Q10 10.4 10 12" fill="none" stroke="#fff" stroke-width="2"/><circle cx="10" cy="14.8" r="1.2" fill="#fff"/></svg>
<div style="position:absolute;left:1429.50px;transform:translateX(-50%);top:495.56px;font-family:'Liberation Sans', sans-serif;font-size:8.2px;line-height:8.2px;color:#555;font-weight:400;font-style:normal;white-space:pre;">HELP</div></body></html>
